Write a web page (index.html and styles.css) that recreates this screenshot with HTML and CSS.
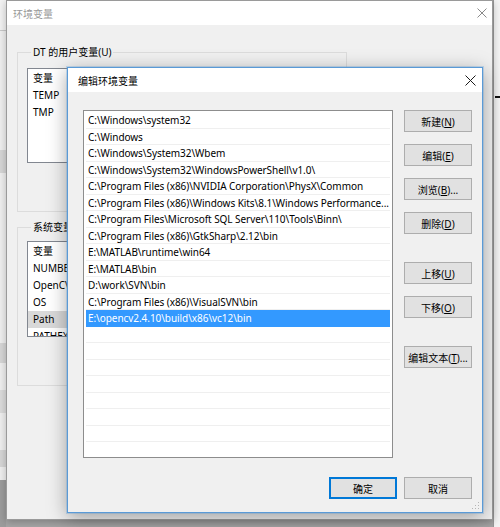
FILE: index.html
```html
<!DOCTYPE html>
<html lang="zh-CN">
<head>
  <meta charset="UTF-8">
  <meta name="viewport" content="width=device-width, initial-scale=1.0">
  <title>编辑环境变量</title>
  <link rel="stylesheet" href="styles.css">
</head>
<body>
  <div class="desk">

    <!-- window behind, left edge only -->
    <div class="back-left">
      <div class="band b-top"></div>
      <div class="band b-line"></div>
      <div class="band b-gap1"></div>
      <div class="band b-dark1"></div>
      <div class="band b-gap2"></div>
      <div class="band b-dark2"></div>
      <div class="band b-gap3"></div>
      <div class="band b-dark3"></div>
      <div class="band b-gap4"></div>
      <div class="band b-dark4"></div>
      <div class="band b-gap5"></div>
      <div class="band b-bottom"></div>
    </div>

    <div class="back-right">
      <div class="rule"></div>
    </div>

    <!-- 环境变量 (inactive) -->
    <div class="win env">
      <div class="titlebar">
        <span>环境变量</span>
        <svg class="close" width="10" height="10" viewBox="0 0 10 10">
          <path d="M0.5 0.5 L9.5 9.5 M9.5 0.5 L0.5 9.5" stroke="#8a8a8a" stroke-width="1" fill="none"/>
        </svg>
      </div>
      <div class="env-body">
        <div class="group">
          <div class="group-title">DT 的用户变量(U)</div>
          <div class="vlist">
            <div class="vhead">变量</div>
            <div class="vrow">TEMP</div>
            <div class="vrow">TMP</div>
          </div>
        </div>
        <div class="group group-sys">
          <div class="group-title">系统变量(S)</div>
          <div class="vlist">
            <div class="vhead">变量</div>
            <div class="vrow">NUMBER_OF_PROCESSORS</div>
            <div class="vrow">OpenCV</div>
            <div class="vrow">OS</div>
            <div class="vrow sel">Path</div>
            <div class="vrow">PATHEXT</div>
          </div>
        </div>
      </div>
    </div>

    <!-- 编辑环境变量 (active) -->
    <div class="win edit">
      <div class="titlebar">
        <span>编辑环境变量</span>
        <svg class="close" width="11" height="11" viewBox="0 0 11 11">
          <path d="M0.5 0.5 L10.5 10.5 M10.5 0.5 L0.5 10.5" stroke="#1a1a1a" stroke-width="1" fill="none"/>
        </svg>
      </div>
      <div class="edit-body">
        <div class="pathlist">
          <div class="prow">C:\Windows\system32</div>
          <div class="prow">C:\Windows</div>
          <div class="prow">C:\Windows\System32\Wbem</div>
          <div class="prow">C:\Windows\System32\WindowsPowerShell\v1.0\</div>
          <div class="prow">C:\Program Files (x86)\NVIDIA Corporation\PhysX\Common</div>
          <div class="prow">C:\Program Files (x86)\Windows Kits\8.1\Windows Performance...</div>
          <div class="prow">C:\Program Files\Microsoft SQL Server\110\Tools\Binn\</div>
          <div class="prow">C:\Program Files (x86)\GtkSharp\2.12\bin</div>
          <div class="prow">E:\MATLAB\runtime\win64</div>
          <div class="prow">E:\MATLAB\bin</div>
          <div class="prow">D:\work\SVN\bin</div>
          <div class="prow">C:\Program Files (x86)\VisualSVN\bin</div>
          <div class="prow sel">E:\opencv2.4.10\build\x86\vc12\bin</div>
          <div class="prow"></div>
          <div class="prow"></div>
          <div class="prow"></div>
          <div class="prow"></div>
          <div class="prow"></div>
          <div class="prow"></div>
          <div class="prow"></div>
          <div class="prow"></div>
        </div>
        <div class="side">
          <button class="btn">新建(<u>N</u>)</button>
          <button class="btn">编辑(<u>E</u>)</button>
          <button class="btn">浏览(<u>B</u>)...</button>
          <button class="btn">删除(<u>D</u>)</button>
          <button class="btn spaced">上移(<u>U</u>)</button>
          <button class="btn">下移(<u>O</u>)</button>
          <button class="btn spaced">编辑文本(<u>T</u>)...</button>
        </div>
      </div>
      <div class="footer">
        <button class="btn default">确定</button>
        <button class="btn">取消</button>
      </div>
      <svg class="grip" width="8" height="8" viewBox="0 0 8 8">
        <rect x="6" y="0" width="1" height="1" fill="#b5b5b5"/>
        <rect x="3" y="3" width="1" height="1" fill="#b5b5b5"/>
        <rect x="6" y="3" width="1" height="1" fill="#b5b5b5"/>
        <rect x="0" y="6" width="1" height="1" fill="#b5b5b5"/>
        <rect x="3" y="6" width="1" height="1" fill="#b5b5b5"/>
        <rect x="6" y="6" width="1" height="1" fill="#b5b5b5"/>
      </svg>
    </div>

  </div>
</body>
</html>
```

FILE: styles.css
```css
* {
  box-sizing: border-box;
}
body {
  margin: 0;
  font: 10px "Noto Sans", "Noto Sans CJK SC", sans-serif;
  color: #000;
}
.desk {
  position: relative;
  width: 500px;
  height: 527px;
  overflow: hidden;
  background: #a6a6a6;
}

/* windows behind */
.back-left {
  position: absolute;
  left: 0;
  top: 0;
  width: 6px;
  height: 527px;
  display: flex;
  flex-direction: column;
  background: #f0f0f0;
}
.b-top { height: 30px; background: #f3f3f3; }
.b-line { height: 1px; background: #c9c9c9; }
.b-gap1 { height: 119px; }
.b-dark1 { height: 23px; background: #d7d7d7; }
.b-gap2 { height: 170px; }
.b-dark2 { height: 20px; background: #d7d7d7; }
.b-gap3 { height: 27px; }
.b-dark3 { height: 23px; background: #dcdcdc; }
.b-gap4 { height: 37px; }
.b-dark4 { height: 17px; background: #d7d7d7; }
.b-gap5 { height: 13px; }
.b-bottom { flex: 1; background: #9c9c9c; }

.back-right {
  position: absolute;
  left: 493px;
  top: 0;
  width: 7px;
  height: 527px;
  background: #f4f4f4;
  border-left: 1px solid #9a9a9a;
}
.back-right .rule {
  margin: 96px 0 0 1px;
  height: 2px;
  background: #111;
}

/* dialogs */
.win {
  position: absolute;
  background: #f0f0f0;
  display: flex;
  flex-direction: column;
}
.titlebar {
  height: 24px;
  flex-shrink: 0;
  background: #fff;
  display: flex;
  align-items: center;
  justify-content: space-between;
}
.close {
  display: block;
}

.env {
  left: 6px;
  top: 0;
  width: 487px;
  height: 520px;
  border: 1px solid #9a9a9a;
  box-shadow: 0 2px 8px rgba(0, 0, 0, 0.25);
}
.env .titlebar {
  padding: 0 5px 0 6px;
  color: #999;
}
.env-body {
  padding: 27px 0 0 10px;
}
.group {
  width: 330px;
  border: 1px solid #dcdcdc;
  padding: 0 11px 48px 9px;
}
.group + .group {
  margin-top: 15px;
}
.group-title {
  width: max-content;
  margin: -9px 0 0 4px;
  padding: 0 2px;
  line-height: 16px;
  background: #f0f0f0;
}
.vlist {
  margin-top: 8px;
  height: 95px;
  border: 1px solid #828790;
  background: #fff;
  overflow: hidden;
}
.group-sys .vlist {
  margin-top: 6px;
  height: 96px;
}
.vhead {
  height: 18px;
  line-height: 18px;
  padding-left: 5px;
}
.vrow {
  height: 17px;
  line-height: 17px;
  padding-left: 5px;
  white-space: nowrap;
}
.vrow.sel {
  background: #d9d9d9;
}

.edit {
  left: 67px;
  top: 67px;
  width: 416px;
  height: 446px;
  border: 1px solid #5a9ad6;
  box-shadow: 0 0 0 1px rgba(90, 154, 214, 0.3), 0 4px 18px rgba(0, 0, 0, 0.35);
}
.edit .titlebar {
  padding: 0 6px 0 10px;
}
.edit-body {
  display: flex;
  gap: 11px;
  padding: 18px 10px 0 15px;
}
.pathlist {
  width: 310px;
  height: 348px;
  border: 1px solid #8d8d8d;
  background: #fff;
  padding: 1px 2px;
  overflow: hidden;
}
.prow {
  height: 16.5px;
  line-height: 16.5px;
  padding-left: 2px;
  letter-spacing: -0.06px;
  white-space: nowrap;
  overflow: hidden;
  box-shadow: inset 0 -1px #efefef;
}
.prow.sel {
  background: #3399ff;
  color: #fff;
  box-shadow: none;
}
.side {
  width: 68px;
  display: flex;
  flex-direction: column;
  gap: 12px;
}
.btn {
  width: 68px;
  height: 22px;
  padding: 0;
  border: 1px solid #adadad;
  background: #e1e1e1;
  font: inherit;
  color: #000;
  white-space: nowrap;
}
.btn.spaced {
  margin-top: 16px;
}
.btn.default {
  border-color: #0078d7;
  box-shadow: inset 0 0 0 1px #0078d7;
}
.footer {
  display: flex;
  justify-content: flex-end;
  gap: 7px;
  padding: 19px 10px 0 0;
}
.grip {
  position: absolute;
  right: 2px;
  bottom: 2px;
}
```
